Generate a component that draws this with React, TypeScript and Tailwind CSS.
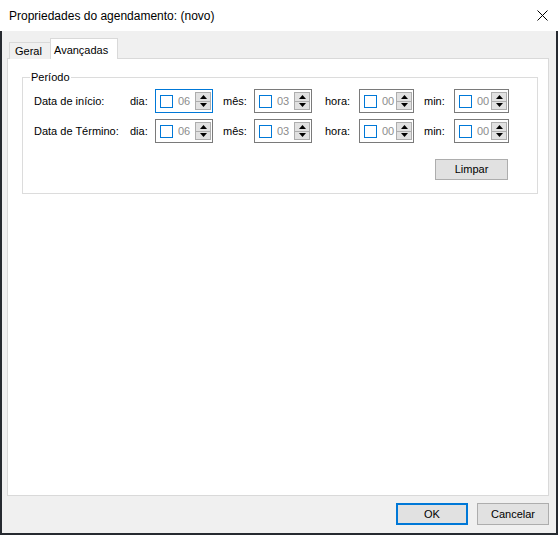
import React from "react";

const UI_FONT = "font-['Liberation_Sans',Arial,sans-serif]";

type SpinProps = {
  value: string;
  wide?: boolean;
  focused?: boolean;
};

// numeric up/down with the "enabled" checkbox on its left
function Spin({ value, wide, focused }: SpinProps) {
  return (
    <div
      className={`flex h-[24px] items-center border bg-white pl-[4px] pr-[1px] ${
        wide ? "w-[58px]" : "w-[55px]"
      } ${focused ? "border-[#0078d7]" : "border-[#7a7a7a]"}`}
    >
      <span className="h-[13px] w-[13px] shrink-0 border border-[#0078d7] bg-white" />
      <span className="ml-[5px] text-[11px] leading-none text-[#8c8c8c]">{value}</span>
      <div className="ml-auto flex h-[18px] w-[16px] flex-col border border-[#adadad] bg-[#e1e1e1]">
        <div className="flex flex-1 items-center justify-center border-b border-[#adadad]">
          <svg width="7" height="4" viewBox="0 0 7 4">
            <path d="M3.5 0 L7 4 L0 4 Z" fill="#000" />
          </svg>
        </div>
        <div className="flex flex-1 items-center justify-center">
          <svg width="7" height="4" viewBox="0 0 7 4">
            <path d="M0 0 L7 0 L3.5 4 Z" fill="#000" />
          </svg>
        </div>
      </div>
    </div>
  );
}

function DateRow({ label, focused }: { label: string; focused?: boolean }) {
  return (
    <div className="flex h-[24px] items-center text-[11px] text-black">
      <span className="w-[96px]">{label}</span>
      <span className="w-[25px]">dia:</span>
      <Spin value="06" wide focused={focused} />
      <span className="ml-[10px] w-[31px]">mês:</span>
      <Spin value="03" wide />
      <span className="ml-[13px] w-[34px]">hora:</span>
      <Spin value="00" />
      <span className="ml-[10px] w-[30px]">min:</span>
      <Spin value="00" />
    </div>
  );
}

function WinButton({ label, primary }: { label: string; primary?: boolean }) {
  return (
    <button
      className={`flex h-[22px] items-center justify-center bg-[#e1e1e1] text-[11px] text-black ${
        primary ? "w-[72px] border-2 border-[#0078d7]" : "w-[72px] border border-[#adadad]"
      }`}
    >
      {label}
    </button>
  );
}

export default function App() {
  return (
    <div className={`flex h-[535px] w-[558px] flex-col bg-white ${UI_FONT}`}>
      {/* title bar */}
      <div className="flex h-[31px] shrink-0 items-center justify-between bg-white pl-[9px] pr-[10px]">
        <span className="text-[12px] text-black">Propriedades do agendamento: (novo)</span>
        <svg width="11" height="11" viewBox="0 0 11 11" className="mr-[0px]">
          <path d="M0.5 0.5 L10.5 10.5 M10.5 0.5 L0.5 10.5" stroke="#000" strokeWidth="1" />
        </svg>
      </div>

      {/* client area */}
      <div className="flex flex-1 flex-col border-x-2 border-b-2 border-[#262a30] bg-[#f0f0f0] pl-[5px] pt-[7px]">
        {/* tabs */}
        <div className="relative z-10 flex h-[21px] items-end">
          <div className="ml-[2px] flex h-[17px] w-[41px] items-center border-l border-t border-[#d9d9d9] bg-[#f0f0f0] pl-[5px] text-[11px]">
            Geral
          </div>
          <div className="flex h-[21px] w-[68px] items-start border-x border-t border-[#d9d9d9] bg-white pl-[3px] pt-[3px] text-[11px]">
            Avançadas
          </div>
        </div>

        {/* tab page */}
        <div className="-mt-px flex h-[438px] w-[542px] flex-col border border-[#d9d9d9] bg-white pl-[14px] pt-[18px]">
          <div className="relative flex w-[516px] flex-col border border-[#dcdcdc] pb-[13px] pl-[11px] pt-[11px]">
            <span className="absolute -top-[8px] left-[7px] bg-white px-[1px] text-[11px] leading-[14px]">
              Período
            </span>
            <div className="flex flex-col gap-[6px]">
              <DateRow label="Data de início:" focused />
              <DateRow label="Data de Término:" />
            </div>
            <button className="mr-[29px] mt-[16px] flex h-[21px] w-[73px] items-center justify-center self-end border border-[#adadad] bg-[#e1e1e1] text-[11px] text-black">
              Limpar
            </button>
          </div>
        </div>

        {/* dialog buttons */}
        <div className="mt-[7px] flex gap-[9px] pl-[389px]">
          <WinButton label="OK" primary />
          <WinButton label="Cancelar" />
        </div>
      </div>
    </div>
  );
}
